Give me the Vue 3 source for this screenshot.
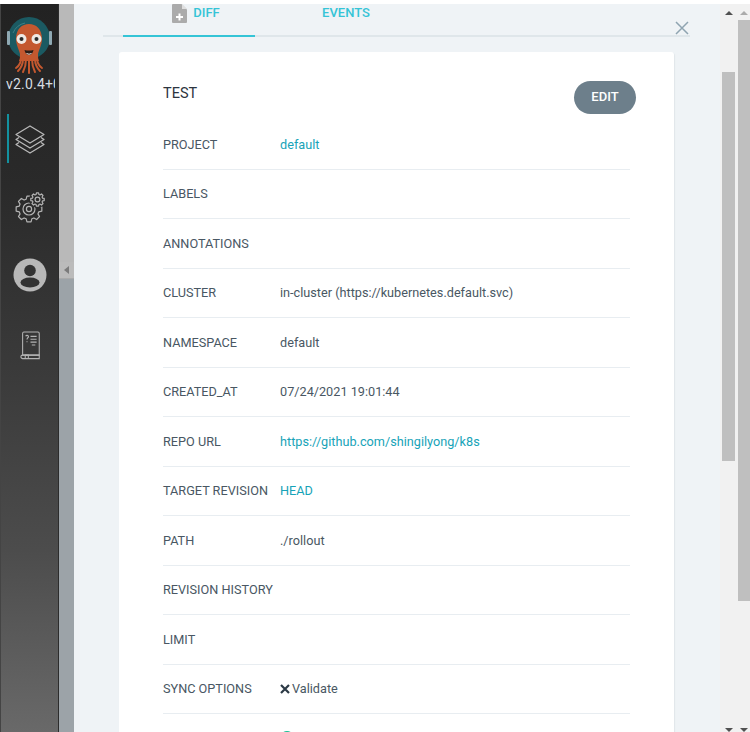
<script setup>
const rows = [
  { label: 'PROJECT', value: 'default', link: true },
  { label: 'LABELS', value: '' },
  { label: 'ANNOTATIONS', value: '' },
  { label: 'CLUSTER', value: 'in-cluster (https://kubernetes.default.svc)' },
  { label: 'NAMESPACE', value: 'default' },
  { label: 'CREATED_AT', value: '07/24/2021 19:01:44' },
  { label: 'REPO URL', value: 'https://github.com/shingilyong/k8s', link: true },
  { label: 'TARGET REVISION', value: 'HEAD', link: true },
  { label: 'PATH', value: './rollout' },
  { label: 'REVISION HISTORY', value: '' },
  { label: 'LIMIT', value: '' },
]

function gear(cx, cy, outer, inner, teeth) {
  const pts = []
  const step = (Math.PI * 2) / teeth
  for (let i = 0; i < teeth; i++) {
    const a = i * step - Math.PI / 2
    const offs = [[-0.5, inner], [-0.28, outer], [0.28, outer], [0.5, inner]]
    for (const [o, r] of offs) {
      const t = a + o * step * 0.72
      pts.push((cx + Math.cos(t) * r).toFixed(2) + ' ' + (cy + Math.sin(t) * r).toFixed(2))
    }
  }
  return 'M' + pts.join('L') + 'Z'
}
const bigGear = gear(14, 17, 13, 10.2, 8)
const smallGear = gear(22.5, 7.5, 6.8, 5.2, 8)
</script>

<template>
  <div class="screen">
    <div class="topline"></div>
    <div class="main">
      <aside class="sidebar">
        <svg class="logo" width="46" height="60" viewBox="0 0 46 60">
          <circle cx="23" cy="22" r="21" fill="#1b5a62" />
          <path d="M7 17a17 17 0 0 1 12-10" fill="none" stroke="#3f8086" stroke-width="1" />
          <rect x="1" y="15" width="3" height="14" rx="1" fill="#8fa9b3" />
          <rect x="43" y="15" width="3" height="14" rx="1" fill="#8fa9b3" />
          <path d="M10 23C10 13 16 8 23 8s13 5 13 15c0 6-3 10-4 15 0 3 0 5 1 7H13c1-2 1-4 1-7-1-5-4-9-4-15z" fill="#c4582f" />
          <g fill="none" stroke="#c4582f" stroke-width="2" stroke-linecap="round">
            <path d="M15 42c0 5-2 8-5 10" />
            <path d="M17 43c0 6-2 9-5 12" />
            <path d="M20 43c0 6-1 9-3 13" />
            <path d="M23 43v14" />
            <path d="M26 43c0 6 1 9 3 13" />
            <path d="M29 43c0 6 2 9 5 12" />
            <path d="M31 42c0 5 2 8 5 10" />
          </g>
          <circle cx="15.500" cy="23" r="5" fill="#efe9e4" />
          <circle cx="30.500" cy="23" r="5" fill="#efe9e4" />
          <circle cx="15.500" cy="23" r="2" fill="#2b2b2b" />
          <circle cx="30.500" cy="23" r="2" fill="#2b2b2b" />
          <path d="M18.500 34q4.500 1 9 0q-1 5-4.500 5t-4.500-5z" fill="#2a1d18" />
          <path d="M20.500 37.500q2.500 1.500 5 0" fill="none" stroke="#f1e3da" stroke-width="1" />
        </svg>
        <div class="version">v2.0.4+0</div>
        <nav class="nav">
          <div class="nav-item active">
            <svg class="stack-icon" width="32" height="32" viewBox="0 0 32 32" fill="none" stroke="#b9b9b9" stroke-width="1.300" stroke-linejoin="round">
              <path d="M16 3 30 11.500 16 20 2 11.500z" />
              <path d="M5 14.500 2 16.500 16 25 30 16.500 27 14.500" />
              <path d="M5 19.500 2 21.500 16 30 30 21.500 27 19.500" />
            </svg>
          </div>
          <div class="nav-item">
            <svg class="gear-icon" width="32" height="32" viewBox="0 0 32 32" fill="none" stroke="#b4b4b4" stroke-width="1.200" stroke-linejoin="round">
              <path :d="bigGear" />
              <circle cx="14" cy="17" r="6" />
              <circle cx="14" cy="17" r="2.600" />
              <circle cx="22.500" cy="7.500" r="8.500" fill="#2b2b2b" stroke="none" />
              <path :d="smallGear" />
              <circle cx="22.500" cy="7.500" r="2.400" />
            </svg>
          </div>
          <div class="nav-item">
            <svg class="user-icon" width="34" height="34" viewBox="0 0 34 34">
              <circle cx="17" cy="17" r="16.500" fill="#b8b8b8" />
              <circle cx="17" cy="12.500" r="5.800" fill="#333" />
              <ellipse cx="17" cy="24.500" rx="9.500" ry="5" fill="#333" />
            </svg>
          </div>
          <div class="nav-item">
            <svg class="book-icon" width="21" height="29" viewBox="0 0 24 30" preserveAspectRatio="none" fill="none" stroke="#b4b4b4" stroke-width="1.200">
              <path d="M3 25V2.500C3 1.700 3.700 1 4.500 1h16c.8 0 1.500.7 1.500 1.500V25z" />
              <path d="M3 25h19v3.500H3c-1 0-2-.8-2-1.800S2 25 3 25z" />
              <path d="M6 28.500v-3.500h3.500v3.500" />
              <path d="M6.500 5.500c.5-1.300 3-1.300 3.200.2.100 1.300-1.700 1.300-1.700 3M8 10.500v1.200" />
              <path d="M12 5.500h7M12 8.500h7M12 11.500h7M13.500 14.500h4" />
            </svg>
          </div>
        </nav>
      </aside>

      <div class="strip">
        <div class="strip-top"></div>
        <div class="strip-handle"><span class="handle-arrow"></span></div>
        <div class="strip-bottom"></div>
      </div>

      <section class="panel">
        <button class="close" aria-label="Close">
          <svg width="16" height="16" viewBox="0 0 16 16" fill="none" stroke="#8fa4b1" stroke-width="1.500">
            <path d="M2 2l12 12M14 2L2 14" />
          </svg>
        </button>
        <div class="tabs">
          <div class="tab tab-active">
            <svg class="file-icon" width="15" height="19" viewBox="0 0 15 19">
              <path d="M1 0h8.500L15 5.500V18a1 1 0 0 1-1 1H1a1 1 0 0 1-1-1V1a1 1 0 0 1 1-1z" fill="#ababab" />
              <path d="M10 0v5h5z" fill="#dfdfdf" />
              <path d="M6.500 9.500h2v2.500H11v2H8.500v2.500h-2V14H4v-2h2.500z" fill="#fff" />
            </svg>
            <span>DIFF</span>
          </div>
          <div class="tab tab-second"><span>EVENTS</span></div>
        </div>

        <div class="card">
          <div class="card-head">
            <h2>TEST</h2>
            <button class="edit">EDIT</button>
          </div>
          <div v-for="r in rows" :key="r.label" class="row">
            <div class="label">{{ r.label }}</div>
            <div class="value" :class="{ link: r.link }">{{ r.value }}</div>
          </div>
          <div class="row">
            <div class="label">SYNC OPTIONS</div>
            <div class="value sync">
              <svg width="10" height="10" viewBox="0 0 10 10" fill="none" stroke="#2b3945" stroke-width="2.200"><path d="M1 1l8 8M9 1L1 9" /></svg>
              <span>Validate</span>
            </div>
          </div>
          <div class="row">
            <div class="label">SYNC POLICY</div>
            <div class="value sync">
              <svg width="14" height="14" viewBox="0 0 14 14"><circle cx="7" cy="7" r="7" fill="#18be94" /></svg>
              <span>Automated</span>
            </div>
          </div>
        </div>
      </section>

      <div class="scrollbars">
        <div class="track track-a">
          <span class="arrow-up dark"></span>
          <div class="thumb thumb-a"></div>
          <span class="arrow-down"></span>
        </div>
        <div class="track track-b">
          <span class="arrow-up"></span>
          <div class="thumb thumb-b"></div>
          <span class="arrow-down"></span>
        </div>
      </div>
    </div>
  </div>
</template>

<style>
html, body { margin: 0; padding: 0; background: #fff; overflow: hidden; }
</style>

<style scoped>
.screen {
  width: 750px;
  height: 732px;
  overflow: hidden;
  font-family: Roboto, "Liberation Sans", sans-serif;
  display: flex;
  flex-direction: column;
  background: #fff;
}
.topline { height: 4px; background: #fff; flex: none; }
.main { flex: 1; display: flex; min-height: 0; }

.sidebar {
  width: 59px;
  flex: none;
  box-sizing: border-box;
  overflow: hidden;
  background: linear-gradient(180deg, #222 0%, #2a2a2a 25%, #3a3a3a 50%, #4c4c4c 75%, #696969 100%);
  border-left: 1px solid #444;
  border-right: 1px solid #2c2c2c;
  padding-top: 12px;
  display: flex;
  flex-direction: column;
  align-items: center;
}
.logo { margin-left: -1px; flex: none; }
.version {
  align-self: flex-start;
  margin-left: 5px;
  width: 49px;
  height: 17px;
  line-height: 17px;
  font-size: 14px;
  letter-spacing: .2px;
  color: #d6dce0;
  white-space: nowrap;
  overflow: hidden;
}
.nav { width: 100%; margin-top: 11px; display: flex; flex-direction: column; }
.nav-item {
  height: 68px;
  display: flex;
  align-items: center;
  justify-content: center;
  margin-left: 1px;
}
.stack-icon { margin-top: 2px; }
.gear-icon { margin: 4px 0 0 2px; }
.user-icon { margin-top: 2px; }
.book-icon { margin: 6px 0 0 1px; }
.nav-item.active { position: relative; }
.nav-item.active::before {
  content: "";
  position: absolute;
  left: 5px;
  top: 10px;
  width: 2px;
  height: 49px;
  background: #13919f;
}

.strip { width: 15px; flex: none; display: flex; flex-direction: column; }
.strip-top { height: 258px; background: #b9b9b9; }
.strip-handle {
  height: 16px;
  background: #bbb;
  border-bottom: 1px solid #aaa;
  display: flex;
  align-items: center;
  justify-content: center;
}
.handle-arrow {
  width: 0; height: 0;
  border-top: 4px solid transparent;
  border-bottom: 4px solid transparent;
  border-right: 5px solid #7b7b7b;
}
.strip-bottom { flex: 1; background: #9ca3a8; }

.panel {
  flex: none;
  width: 646px;
  box-sizing: border-box;
  background: #eff3f6;
  position: relative;
  overflow: hidden;
  padding: 0 0 0 29px;
}
.close {
  position: absolute;
  top: 16px;
  left: 600px;
  padding: 0;
  border: 0;
  background: none;
  line-height: 0;
}
.tabs {
  width: 587px;
  height: 33px;
  display: flex;
  border-bottom: 2px solid #dfe6ea;
  padding-left: 20px;
  box-sizing: border-box;
}
.tab {
  width: 132px;
  height: 31px;
  box-sizing: border-box;
  display: flex;
  align-items: flex-start;
  justify-content: center;
  font-size: 13px;
  font-weight: 500;
  line-height: 18px;
  color: #35c4d6;
}
.tab-active {
  border-bottom: 2px solid #35c4d6;
  height: 33px;
  margin-bottom: -2px;
  padding-left: 14px;
}
.tab-second { margin-left: 25px; }
.file-icon { margin-right: 6px; }

.card {
  width: 555px;
  margin: 15px 0 0 16px;
  background: #fff;
  border-radius: 3px;
  box-sizing: border-box;
  padding: 0 44px;
  box-shadow: 1px 1px 1px #e0e6ea;
}
.card-head {
  height: 68px;
  display: flex;
  align-items: flex-start;
  justify-content: space-between;
  position: relative;
}
.card-head h2 {
  margin: 32px 0 0;
  font-size: 14.500px;
  font-weight: 400;
  line-height: 20px;
  color: #2d3540;
}
.edit {
  position: absolute;
  top: 29px;
  right: -6px;
  width: 62px;
  height: 33px;
  border-radius: 17px;
  border: 0;
  background: #6d7f8b;
  color: #fff;
  font: 500 13px Roboto, sans-serif;
  padding: 0 0 2px;
}
.row {
  height: 49.500px;
  display: flex;
  align-items: center;
  box-sizing: border-box;
  border-bottom: 1px solid #e8edf1;
  font-size: 12.700px;
  color: #495763;
}
.label { width: 117px; flex: none; white-space: nowrap; }
.value { white-space: nowrap; }
.link { color: #17a3b8; }
.sync { display: flex; align-items: center; gap: 2px; }
.sync svg { flex: none; }

.scrollbars { flex: 1; display: flex; background: #f1f1f1; padding-left: 2px; }
.track { position: relative; display: flex; flex-direction: column; align-items: center; flex: none; }
.track-a { width: 13px; }
.track-b { width: 12px; margin-left: 3px; }
.thumb { width: 100%; background: #bfbfbf; }
.thumb-a { margin-top: 68px; height: 389px; }
.thumb-b { margin-top: 16px; height: 581px; }
.arrow-up, .arrow-down {
  width: 0; height: 0;
  border-left: 4px solid transparent;
  border-right: 4px solid transparent;
  position: absolute;
  left: 50%;
  margin-left: -4px;
}
.arrow-up { top: 7px; border-bottom: 4px solid #ababab; }
.arrow-up.dark { border-bottom-color: #505050; }
.arrow-down { bottom: 0; border-top: 4px solid #505050; }
</style>
